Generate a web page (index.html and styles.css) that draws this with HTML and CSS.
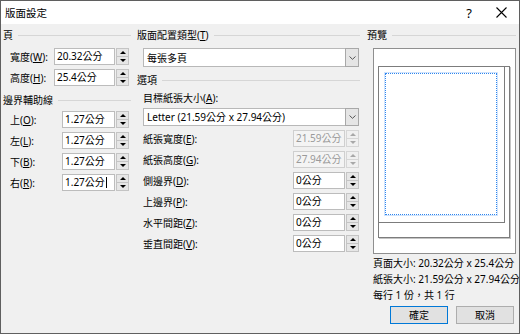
FILE: index.html
```html
<!DOCTYPE html>
<html lang="zh-Hant">
<head>
<meta charset="utf-8">
<title>版面設定</title>
<link rel="stylesheet" href="styles.css">
</head>
<body>
<div class="window">
  <div class="titlebar">
    <span class="title">版面設定</span>
    <span class="help">?</span>
    <span class="close"><svg width="11" height="11" viewBox="0 0 11 11"><path d="M0.5 0.5 L10.5 10.5 M10.5 0.5 L0.5 10.5" stroke="#000" stroke-width="1.1" fill="none"/></svg></span>
  </div>
  <div class="body">
    <div class="col col-left">
      <div class="hdr"><span>頁</span></div>
      <div class="frow first">
        <span class="lbl lbl-size">寬度(<u>W</u>):</span>
        <div class="field f-size">20.32公分</div>
        <div class="spin"><i class="up"></i><i class="down"></i></div>
      </div>
      <div class="frow">
        <span class="lbl lbl-size">高度(<u>H</u>):</span>
        <div class="field f-size">25.4公分</div>
        <div class="spin"><i class="up"></i><i class="down"></i></div>
      </div>
      <div class="hdr hdr-second"><span>邊界輔助線</span></div>
      <div class="frow">
        <span class="lbl lbl-margin">上(<u>O</u>):</span>
        <div class="field f-margin">1.27公分</div>
        <div class="spin"><i class="up"></i><i class="down"></i></div>
      </div>
      <div class="frow">
        <span class="lbl lbl-margin">左(<u>L</u>):</span>
        <div class="field f-margin">1.27公分</div>
        <div class="spin"><i class="up"></i><i class="down"></i></div>
      </div>
      <div class="frow">
        <span class="lbl lbl-margin">下(<u>B</u>):</span>
        <div class="field f-margin">1.27公分</div>
        <div class="spin"><i class="up"></i><i class="down"></i></div>
      </div>
      <div class="frow">
        <span class="lbl lbl-margin">右(<u>R</u>):</span>
        <div class="field f-margin">1.27公分<span class="caret"></span></div>
        <div class="spin"><i class="up"></i><i class="down"></i></div>
      </div>
    </div>

    <div class="col col-mid">
      <div class="hdr"><span>版面配置類型(<u>T</u>)</span></div>
      <div class="combo combo-type">
        <span class="combo-text">每張多頁</span>
        <span class="combo-arrow"><svg width="7" height="4" viewBox="0 0 7 4"><path d="M0.5 0.5 L3.5 3.3 L6.5 0.5" stroke="#555" stroke-width="1" fill="none"/></svg></span>
      </div>
      <div class="hdr hdr-options"><span>選項</span></div>
      <div class="sublbl">目標紙張大小(<u>A</u>):</div>
      <div class="combo combo-paper">
        <span class="combo-text">Letter (21.59公分 x 27.94公分)</span>
        <span class="combo-arrow"><svg width="7" height="4" viewBox="0 0 7 4"><path d="M0.5 0.5 L3.5 3.3 L6.5 0.5" stroke="#555" stroke-width="1" fill="none"/></svg></span>
      </div>
      <div class="frow mrow first-m">
        <span class="lbl lbl-mid">紙張寬度(<u>E</u>):</span>
        <div class="field f-mid disabled">21.59公分</div>
        <div class="spin disabled"><i class="up"></i><i class="down"></i></div>
      </div>
      <div class="frow mrow">
        <span class="lbl lbl-mid">紙張高度(<u>G</u>):</span>
        <div class="field f-mid disabled">27.94公分</div>
        <div class="spin disabled"><i class="up"></i><i class="down"></i></div>
      </div>
      <div class="frow mrow">
        <span class="lbl lbl-mid">側邊界(<u>D</u>):</span>
        <div class="field f-mid">0公分</div>
        <div class="spin"><i class="up"></i><i class="down"></i></div>
      </div>
      <div class="frow mrow">
        <span class="lbl lbl-mid">上邊界(<u>P</u>):</span>
        <div class="field f-mid">0公分</div>
        <div class="spin"><i class="up"></i><i class="down"></i></div>
      </div>
      <div class="frow mrow">
        <span class="lbl lbl-mid">水平間距(<u>Z</u>):</span>
        <div class="field f-mid">0公分</div>
        <div class="spin"><i class="up"></i><i class="down"></i></div>
      </div>
      <div class="frow mrow">
        <span class="lbl lbl-mid">垂直間距(<u>V</u>):</span>
        <div class="field f-mid">0公分</div>
        <div class="spin"><i class="up"></i><i class="down"></i></div>
      </div>
    </div>

    <div class="col col-right">
      <div class="hdr"><span>預覽</span></div>
      <div class="preview">
        <div class="sheet paper"></div>
        <div class="sheet page"></div>
        <div class="guides"></div>
      </div>
      <div class="info">
        <div>頁面大小: 20.32公分 x 25.4公分</div>
        <div>紙張大小: 21.59公分 x 27.94公分</div>
        <div>每行 1 份，共 1 行</div>
      </div>
      <div class="buttons">
        <button class="btn default">確定</button>
        <button class="btn">取消</button>
      </div>
    </div>
  </div>
</div>
</body>
</html>
```

FILE: styles.css
```css
* { box-sizing: border-box; }

body {
  margin: 0;
  background: #f0f0f0;
}

.window {
  width: 520px;
  height: 334px;
  border: 1px solid #5f5f5f;
  background: #f0f0f0;
  font-family: "Noto Sans", "Noto Sans CJK TC", sans-serif;
  font-size: 10px;
  line-height: 14px;
  color: #000;
  display: flex;
  flex-direction: column;
  overflow: hidden;
}

u { text-decoration: underline; text-underline-offset: 1px; }

.titlebar {
  flex: none;
  height: 23px;
  background: #fff;
  display: flex;
  align-items: center;
  padding-left: 4px;
}

.title { flex: 1; font-size: 10.5px; }

.help {
  width: 20px;
  text-align: center;
  font-size: 13px;
  margin-right: 10px;
}

.close {
  width: 24px;
  margin-right: 6px;
  display: flex;
  justify-content: center;
  align-items: center;
}

.body {
  flex: 1;
  display: flex;
  padding: 4px 0 0 2px;
}

.col { display: flex; flex-direction: column; }
.col-left { width: 128px; }
.col-mid { width: 223px; margin-left: 6px; }
.col-right { width: 149px; margin-left: 7px; }

.hdr {
  display: flex;
  align-items: center;
  height: 14px;
  white-space: nowrap;
}
.hdr::after {
  content: "";
  flex: 1;
  border-top: 1px solid #d6d6d6;
  margin-left: 5px;
}
.hdr-second { margin-top: 7px; }
.hdr-options { margin-top: 6px; }

.frow {
  display: flex;
  align-items: center;
  height: 17px;
  margin-top: 4px;
  padding-left: 7px;
  white-space: nowrap;
}
.frow.first { margin-top: 6px; }
.mrow { padding-left: 6px; }

.lbl-size { width: 44px; }
.lbl-margin { width: 52px; }
.lbl-mid { width: 150px; }

.field {
  height: 17px;
  background: #fff;
  border: 1px solid #bcbcbc;
  padding-left: 2px;
  line-height: 15px;
  display: flex;
  align-items: center;
  white-space: nowrap;
}
.f-size { width: 61px; }
.f-margin { width: 53px; }
.f-mid { width: 52px; }

.field.disabled {
  background: #f4f4f4;
  border-color: #cfcfcf;
  color: #9a9a9a;
}

.caret {
  display: inline-block;
  width: 1px;
  height: 11px;
  background: #000;
  margin-left: 1px;
}

.spin {
  width: 13px;
  height: 17px;
  margin-left: 1px;
  border: 1px solid #c4c4c4;
  background: #e6e6e6;
  display: flex;
  flex-direction: column;
}
.spin i {
  flex: 1;
  display: flex;
  align-items: center;
  justify-content: center;
}
.spin i + i { border-top: 1px solid #c4c4c4; }
.spin .up::before {
  content: "";
  border-left: 3px solid transparent;
  border-right: 3px solid transparent;
  border-bottom: 3px solid #000;
}
.spin .down::before {
  content: "";
  border-left: 3px solid transparent;
  border-right: 3px solid transparent;
  border-top: 3px solid #000;
}
.spin.disabled { background: #f0f0f0; border-color: #d6d6d6; }
.spin.disabled i + i { border-top-color: #d6d6d6; }
.spin.disabled .up::before { border-bottom-color: #a8a8a8; }
.spin.disabled .down::before { border-top-color: #a8a8a8; }

.combo {
  margin-left: 6px;
  width: 216px;
  background: #fff;
  border: 1px solid #b8b8b8;
  display: flex;
  align-items: stretch;
}
.combo-type { margin-top: 6px; height: 19px; }
.combo-paper { margin-top: 3px; height: 18px; }

.combo-text {
  flex: 1;
  padding-left: 3px;
  display: flex;
  align-items: center;
  white-space: nowrap;
}
.combo-arrow {
  width: 14px;
  background: #e5e5e5;
  border: 1px solid #a8a8a8;
  margin: -1px -1px -1px 0;
  display: flex;
  align-items: center;
  justify-content: center;
}

.sublbl {
  margin-top: 4px;
  height: 14px;
  padding-left: 6px;
  white-space: nowrap;
}
.first-m { margin-top: 4px; }

.preview {
  position: relative;
  margin: 6px 0 0 6px;
  width: 143px;
  height: 206px;
  background: #fff;
  border: 1px solid #8f8f8f;
}
.sheet {
  position: absolute;
  left: 4px;
  top: 17px;
  border: 1px solid #7c7c7c;
  background: #fff;
}
.paper {
  width: 132px;
  height: 172px;
  box-shadow: 1px 1px 0 #c4c4c4;
}
.page {
  width: 127px;
  height: 157px;
}
.guides {
  position: absolute;
  left: 11px;
  top: 24px;
  width: 112px;
  height: 142px;
  border: 1px dotted #2f86ee;
  box-shadow: 0 0 0 1px rgba(120, 175, 245, 0.35);
}

.info {
  margin-top: 1px;
  padding-left: 6px;
  line-height: 16px;
  white-space: nowrap;
}

.buttons {
  margin-top: 3px;
  display: flex;
  justify-content: flex-end;
  gap: 8px;
  padding-right: 2px;
}
.btn {
  width: 58px;
  height: 18px;
  border: 1px solid #adadad;
  background: #e1e1e1;
  font: inherit;
  font-size: 10px;
  line-height: 14px;
  padding: 0;
  color: #000;
}
.btn.default { border-color: #0078d7; }
```
